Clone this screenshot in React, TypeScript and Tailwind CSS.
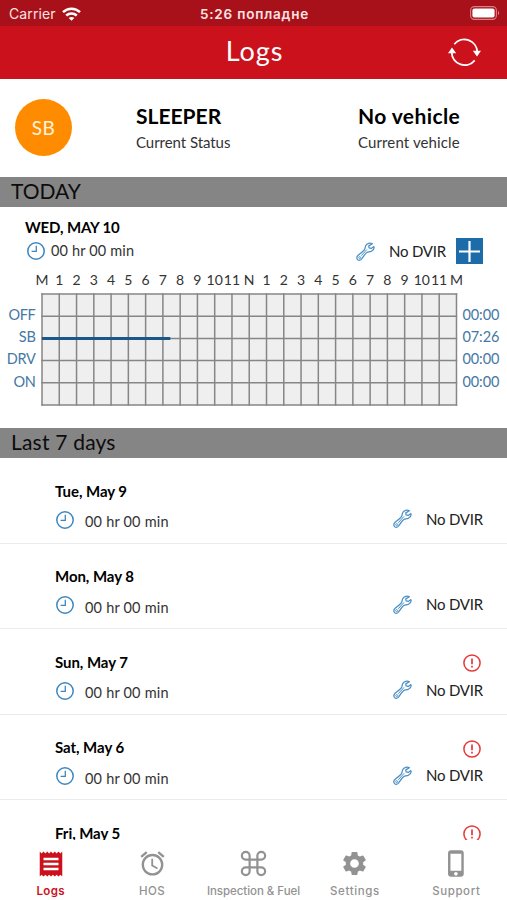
import { Command } from "lucide-react";
import { MdAlarm, MdPhoneIphone, MdReceipt, MdSettings } from "react-icons/md";

const HOURS = [
  "M", "1", "2", "3", "4", "5", "6", "7", "8", "9", "10", "11",
  "N", "1", "2", "3", "4", "5", "6", "7", "8", "9", "10", "11", "M",
];

const STATUSES = [
  { label: "OFF", total: "00:00" },
  { label: "SB", total: "07:26" },
  { label: "DRV", total: "00:00" },
  { label: "ON", total: "00:00" },
];

const DAYS = [
  { date: "Tue, May 9", alert: false },
  { date: "Mon, May 8", alert: false },
  { date: "Sun, May 7", alert: true },
  { date: "Sat, May 6", alert: true },
  { date: "Fri, May 5", alert: true },
];

const TABS = [
  { label: "Logs", icon: <MdReceipt size={30} />, style: "font-semibold tracking-[0.4px] text-[#cb121c]" },
  { label: "HOS", icon: <MdAlarm size={29} />, style: "font-medium tracking-[0.5px] text-[#929292]" },
  { label: "Inspection & Fuel", icon: <Command size={31} strokeWidth={1.7} />, style: "font-medium tracking-[-0.05px] text-[#929292]" },
  { label: "Settings", icon: <MdSettings size={29} />, style: "font-medium tracking-[0.6px] text-[#929292]" },
  { label: "Support", icon: <MdPhoneIphone size={29} />, style: "font-medium tracking-[0.6px] text-[#929292]" },
];

function ClockIcon() {
  return (
    <svg width="18" height="18" viewBox="0 0 18 18" fill="none" stroke="#3d87c0" className="shrink-0">
      <circle cx="9" cy="9" r="8.2" strokeWidth="1.5" />
      <path d="M9.3 3.8V9.3H4.6" strokeWidth="1.3" />
    </svg>
  );
}

function WrenchIcon() {
  return (
    <svg width="19" height="19" viewBox="0 0 19 19" fill="none" stroke="#4a90c6" strokeWidth="1.25" strokeLinejoin="round" className="shrink-0">
      <path d="M16.4 1.7C14 .5 11 1.2 9.8 3.5C9 5 9.3 6.6 8.5 7.7C7.3 9.3 4.4 11.5 2.2 13.3C.4 14.8.5 16.6 1.6 17.6C2.8 18.7 4.6 18.4 5.6 17C7.3 14.6 9 11.8 10.8 10.6C12 9.8 13.7 10.2 15.4 9.3C17.4 8.2 18.5 6.3 17.9 4.6L15.2 6.4L13 5.8L12.8 3.9Z" />
      <path d="M11 7.4L5.3 13.7" strokeWidth="1" />
      <circle cx="3.7" cy="15.6" r="1" strokeWidth=".9" />
    </svg>
  );
}

function AlertIcon() {
  return (
    <svg width="18" height="18" viewBox="0 0 18 18" fill="none" stroke="#e5383b" className="shrink-0">
      <circle cx="9" cy="9" r="8.1" strokeWidth="1.5" />
      <path d="M9 4.6V10.3M9 11.7V13.4" strokeWidth="1.7" />
    </svg>
  );
}

function StatusBar() {
  return (
    <div className="grid h-[26px] shrink-0 grid-cols-3 items-center bg-[#a81119] pl-[9px] pr-[7px] font-['Inter',sans-serif] text-[#fbe3e3]">
      <div className="flex items-center gap-1.5 pt-px">
        <span className="text-[14px] tracking-[0.1px]">Carrier</span>
        <svg width="19" height="14" viewBox="0 0 19 14" fill="none" stroke="#fff" strokeWidth="2.5">
          <path d="M1 5.2C5.8.6 13.2.6 18 5.2" />
          <path d="M4.2 8.5C7.2 5.7 11.8 5.7 14.8 8.5" />
          <path d="M9.5 13.8L6.7 11C8.3 9.5 10.7 9.5 12.3 11Z" fill="#fff" stroke="none" />
        </svg>
      </div>
      <span className="whitespace-nowrap pt-[2px] text-center text-[13.5px] font-semibold tracking-[0.8px]">5:26 попладне</span>
      <svg width="30" height="14" viewBox="0 0 30 14" className="justify-self-end">
        <rect x=".6" y=".6" width="25.8" height="12.8" rx="3.8" fill="none" stroke="#d98085" strokeWidth="1.1" />
        <rect x="2.4" y="2.4" width="22.2" height="9.2" rx="2" fill="#fff" />
        <path d="M28 4.8C29.6 5.6 29.6 8.4 28 9.2Z" fill="#d98085" />
      </svg>
    </div>
  );
}

function NavBar() {
  return (
    <header className="grid h-[53px] shrink-0 grid-cols-3 items-center bg-[#cb121c] text-white">
      <span />
      <h1 className="pb-[4px] pl-[2px] text-center text-[27px] leading-[46px] tracking-[0.9px]">Logs</h1>
      <svg width="33" height="29" viewBox="0 0 33 29" fill="none" stroke="#fff" strokeWidth="1.8" className="mr-[26px] justify-self-end">
        <path d="M6.3 6.2A13 13 0 0 1 29.3 14" />
        <path d="M26.7 22.4A13 13 0 0 1 3.7 14.6" />
        <path d="M0 15.2L4 9.4L8.2 15.2ZM24.8 12.8H33L29 18.6Z" fill="#fff" stroke="none" />
      </svg>
    </header>
  );
}

function SectionTitle({ title, className }: { title: string; className: string }) {
  return (
    <h2 className={`h-[30px] shrink-0 bg-[#858585] pl-[11px] text-[21px] text-[#0c0c0c] ${className}`}>
      {title}
    </h2>
  );
}

function LogGrid() {
  const cols = Array.from({ length: 25 }, (_, i) => 1 + i * 17.27);
  const rows = Array.from({ length: 6 }, (_, i) => 1 + i * 22.2);
  return (
    <svg width="417" height="113" viewBox="0 0 417 113" className="shrink-0">
      <rect x="1" y="1" width="414.5" height="111" fill="#efefef" />
      <g stroke="#868686" strokeWidth="1.5">
        {cols.map((x) => <line key={x} x1={x} x2={x} y1=".3" y2="112.7" />)}
        {rows.map((y) => <line key={y} x1=".3" x2="416.2" y1={y} y2={y} />)}
      </g>
      <line x1="1" x2="129.3" y1="45.4" y2="45.4" stroke="#1c5789" strokeWidth="3" />
    </svg>
  );
}

function Today() {
  return (
    <section className="h-[221px] shrink-0">
      <div className="flex h-[64px] justify-between pl-[25px] pr-[24px]">
        <div className="pt-[11px]">
          <div className="text-[15px] font-bold leading-[18px] tracking-[-0.15px] text-black">WED, MAY 10</div>
          <div className="mt-[6px] flex items-center gap-[6px] pl-[2px]">
            <ClockIcon />
            <span className="text-[14.5px] leading-[18px] tracking-[0.15px] text-[#333]">00 hr 00 min</span>
          </div>
        </div>
        <div className="flex items-center pt-[24px]">
          <WrenchIcon />
          <span className="ml-[14px] w-[57px] whitespace-nowrap text-[15px] tracking-[-0.2px] text-[#222]">No DVIR</span>
          <button className="ml-[10px] flex h-[26px] w-[27px] items-center justify-center bg-[#1b6ca8]" aria-label="Add DVIR">
            <svg width="21" height="21" viewBox="0 0 21 21" stroke="#fff" strokeWidth="2.2">
              <path d="M10.5 0V21M0 10.5H21" />
            </svg>
          </button>
        </div>
      </div>
      <div className="ml-[33.4px] flex h-[22px] w-[431.8px] text-[14px] leading-[18px] text-[#333]">
        {HOURS.map((hour, i) => (
          <span key={i} className="flex flex-1 justify-center whitespace-nowrap">{hour}</span>
        ))}
      </div>
      <div className="flex">
        <div className="flex w-[35.5px] flex-col pt-[11px] text-right text-[14.5px] leading-[22.2px] tracking-[-0.3px] text-[#4478a5]">
          {STATUSES.map((s) => <span key={s.label}>{s.label}</span>)}
        </div>
        <div className="ml-[5.5px]"><LogGrid /></div>
        <div className="ml-[4.5px] flex flex-col pt-[11px] text-[14.5px] leading-[22.2px] tracking-[-0.1px] text-[#4478a5]">
          {STATUSES.map((s) => <span key={s.label}>{s.total}</span>)}
        </div>
      </div>
    </section>
  );
}

function DayRow({ date, alert }: { date: string; alert: boolean }) {
  return (
    <li className="flex h-[85.5px] shrink-0 justify-between border-b border-[#ececec] pl-[55px] pr-[24px]">
      <div className="pt-[23.5px]">
        <div className="text-[15px] font-bold leading-[18px] tracking-[-0.05px] text-black">{date}</div>
        <div className="mt-[11px] flex gap-[11px] pl-[1px]">
          <ClockIcon />
          <span className="pt-[2.5px] text-[14.5px] leading-[18px] tracking-[0.2px] text-[#333]">00 hr 00 min</span>
        </div>
      </div>
      <div className="flex flex-col items-end pt-[23px]">
        <div className="h-[18px] pt-[2px] pr-[2px]">{alert && <AlertIcon />}</div>
        <div className="mt-[10px] flex items-center">
          <WrenchIcon />
          <span className="ml-[14px] w-[57px] whitespace-nowrap text-[15px] leading-[18px] tracking-[-0.2px] text-[#222]">No DVIR</span>
        </div>
      </div>
    </li>
  );
}

function TabBar() {
  return (
    <nav className="grid h-[60px] shrink-0 grid-cols-5 bg-white font-['Inter',sans-serif]">
      {TABS.map((tab) => (
        <a key={tab.label} className={`flex flex-col items-center pt-2 ${tab.style}`}>
          <span className="flex h-[31px] items-center">{tab.icon}</span>
          <span className="mt-[4px] whitespace-nowrap text-[11.5px] leading-[16px]">{tab.label}</span>
        </a>
      ))}
    </nav>
  );
}

export default function App() {
  return (
    <div className="flex h-[900px] w-[507px] flex-col overflow-hidden bg-white font-['Lato','Open_Sans',sans-serif]">
      <StatusBar />
      <NavBar />
      <section className="flex h-[98px] shrink-0 items-start pl-[15px]">
        <div className="mt-[20px] flex size-[57px] items-center justify-center rounded-full bg-[#ff8c00] pt-px text-[19px] tracking-[0.5px] text-[#fff3df]">SB</div>
        <div className="ml-[64px] w-[222px] pt-[24px]">
          <div className="text-[21px] font-bold leading-[26px] text-black">SLEEPER</div>
          <div className="mt-[4px] text-[15px] leading-[18px] tracking-[-0.05px] text-[#333]">Current Status</div>
        </div>
        <div className="pt-[24px]">
          <div className="text-[21px] font-bold leading-[26px] tracking-[0.4px] text-black">No vehicle</div>
          <div className="mt-[4px] text-[15px] leading-[18px] tracking-[0.12px] text-[#333]">Current vehicle</div>
        </div>
      </section>
      <SectionTitle title="TODAY" className="leading-[28px]" />
      <Today />
      <SectionTitle title="Last 7 days" className="leading-[28px] tracking-[0.2px]" />
      <ul className="flex min-h-0 flex-1 flex-col overflow-hidden">
        {DAYS.map((day) => <DayRow key={day.date} {...day} />)}
      </ul>
      <TabBar />
    </div>
  );
}
